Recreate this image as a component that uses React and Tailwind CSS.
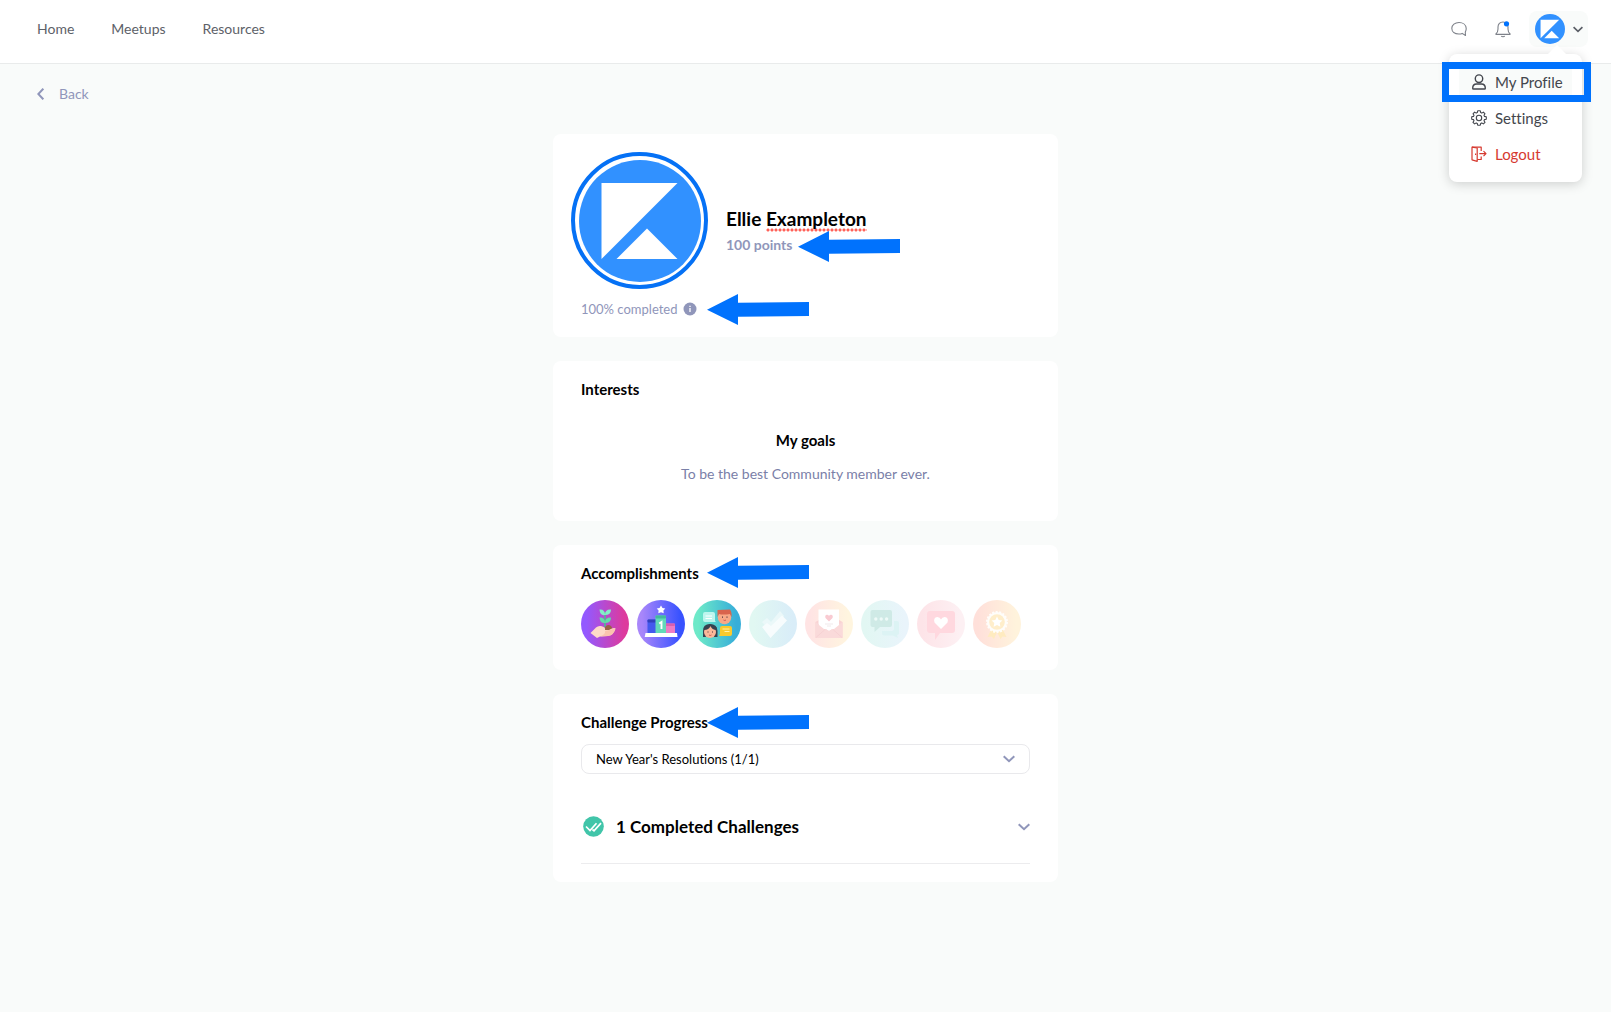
import React, { useState } from "react";

const LogoMark = ({ className }) => (
  <svg viewBox="0 0 122 122" className={className} aria-hidden="true">
    <circle cx="61" cy="61" r="61" fill="#3191ff" />
    <path d="M22.500 23H98.500L22.500 99Z" fill="#fff" />
    <path d="M37.500 99L68 68.500L98.500 99Z" fill="#fff" />
  </svg>
);

const Arrow = ({ className }) => (
  <svg viewBox="0 0 102 31" className={`absolute h-[31px] w-[102px] ${className}`} aria-hidden="true">
    <path d="M0 15.700L31 0V8.700L102 8V22L31 22.700V31Z" fill="#0072fd" />
  </svg>
);

const Chevron = ({ className }) => (
  <svg viewBox="0 0 12 8" className={className} fill="none" stroke="currentColor" strokeWidth="2" aria-hidden="true">
    <path d="M0.700 1.200L6 6.200L11.300 1.200" />
  </svg>
);

const ChatIcon = () => (
  <svg viewBox="0 0 16 16" className="h-4 w-4" fill="none" stroke="#7d8189" strokeWidth="1.100" strokeLinejoin="round" aria-hidden="true">
    <path d="M14.300 11.100C15 10 15.300 8.900 15.200 7.300C15 3.800 12 1.500 8 1.500C4 1.500 0.800 3.900 0.800 7.300C0.800 10.800 3.800 13 7.800 13C9 13 10.200 12.800 11.200 12.400L14.500 14.500Z" />
  </svg>
);

const BellIcon = () => (
  <svg viewBox="0 0 16 18" className="h-[18px] w-4" fill="none" stroke="#7d8189" strokeWidth="1.100" strokeLinejoin="round" aria-hidden="true">
    <path d="M1 13.800C2.600 12.500 3 11.500 3 9V7C3 4 5 2 8 2C11 2 13 4 13 7V9C13 11.500 13.400 12.500 15 13.800V14.400H1Z" />
    <path d="M6.200 16.200C7 17 9 17 9.800 16.200" />
    <circle cx="11.500" cy="3.800" r="2.600" fill="#0072fd" stroke="none" />
  </svg>
);

const UserIcon = () => (
  <svg viewBox="0 0 16 16" className="h-4 w-4" fill="none" stroke="currentColor" strokeWidth="1.400" aria-hidden="true">
    <rect x="4.300" y="0.900" width="7.400" height="7.600" rx="3.700" />
    <path d="M5.500 10H10.500C13 10 14.300 11.700 14.300 14.200Q14.300 15 13.500 15H2.500Q1.700 15 1.700 14.200C1.700 11.700 3 10 5.500 10Z" />
  </svg>
);

const GearIcon = () => (
  <svg viewBox="0 0 16 16" className="h-4 w-4" fill="none" stroke="currentColor" strokeWidth="1.100" strokeLinejoin="round" aria-hidden="true">
    <path d="M6.700 0.800H9.300L9.700 2.600L10.800 3.100L12.400 2.100L14 3.800L13 5.300L13.500 6.400L15.300 6.800V9.200L13.500 9.600L13 10.700L14 12.300L12.400 13.900L10.800 12.900L9.700 13.400L9.300 15.200H6.700L6.300 13.400L5.200 12.900L3.600 13.900L2 12.300L3 10.700L2.500 9.600L0.700 9.200V6.800L2.500 6.400L3 5.300L2 3.800L3.600 2.100L5.200 3.100L6.300 2.600Z" />
    <circle cx="8" cy="8" r="2.700" />
  </svg>
);

const LogoutIcon = () => (
  <svg viewBox="0 0 16 16" className="h-4 w-4" fill="none" stroke="currentColor" strokeWidth="1.200" strokeLinejoin="round" aria-hidden="true">
    <path d="M1 1.200L6.200 2V15.300L1 13.800Z" />
    <path d="M1 1.200H10.200V5M10.200 10.500V13.500H6.200M4.600 7.500V8.900" />
    <path d="M8.300 7.700H14.800M12.500 5.200L15 7.700L12.500 10.200" />
  </svg>
);

const badges = [
  {
    name: "Seedling",
    from: "#9359ff",
    to: "#dd3a9d",
    art: (
      <>
        <path d="M24 27V12" stroke="#43c58d" strokeWidth="1.500" />
        <path d="M24 15Q19 16 18.500 9.500Q24 9 24 15Q24 9 30 9.500Q30 15 24 15Z" fill="#85edc9" />
        <path d="M24 23Q19 23.500 18.500 17.500Q24 17 24 23Q24 17 30 17.500Q30 23 24 23Z" fill="#62dca8" />
        <path d="M23 31Q24 24 28 25Q32 26 31 31Z" fill="#9a6047" />
        <path d="M9.500 33L15 27.500Q17 25.500 20 26Q25 27 24 30L28 30Q33 27 34.500 28.500Q33 35 27 36L19 36.500L16 38Z" fill="#fed9c8" />
        <path d="M24 31L34.500 28.500Q33 35 27 36L19 36.500Q25 34 24 31Z" fill="#fbc3ae" />
      </>
    ),
  },
  {
    name: "Podium",
    from: "#a886fa",
    to: "#3852ff",
    art: (
      <>
        <path d="M24 5.500L25.500 8L28.300 8.500L26.400 10.600L26.700 13.300L24 12.200L21.300 13.300L21.600 10.600L19.700 8.500L22.500 8Z" fill="#fff" />
        <rect x="10.500" y="19.500" width="9" height="14" rx="1" fill="#4359ed" />
        <rect x="10.500" y="19.500" width="9" height="3" rx="1" fill="#3140bd" />
        <rect x="28.500" y="23.500" width="9.500" height="10" rx="1" fill="#ed7cc5" />
        <rect x="28.500" y="23.500" width="9.500" height="2.500" rx="1" fill="#d85faf" />
        <rect x="18.500" y="15.500" width="10.500" height="18" rx="1" fill="#62d9b9" />
        <rect x="18.500" y="15.500" width="10.500" height="3" rx="1" fill="#43b99d" />
        <path d="M22.200 23.500L24.500 22V29" fill="none" stroke="#fff" strokeWidth="1.900" />
        <path d="M8.500 33H40L40.500 37H7.700Z" fill="#fff" />
      </>
    ),
  },
  {
    name: "Conversation",
    from: "#6de9c8",
    to: "#37aed9",
    art: (
      <>
        <path d="M12 12H20Q22 12 22 14V21L23 22H12Q10 22 10 20V14Q10 12 12 12Z" fill="#bdf6ee" />
        <path d="M12.500 16H19M12.500 18.500H19" stroke="#fff" strokeWidth="1" />
        <circle cx="31.500" cy="17.500" r="6.700" fill="#f8a987" />
        <path d="M24.500 17V10L37 9.500Q39 12 38.500 17L37 14Q30 15 26 14Z" fill="#d9644d" />
        <path d="M10 37V31Q10 24 17 24Q24 24 24.500 31V37Z" fill="#374250" />
        <circle cx="17" cy="32" r="6" fill="#fbb799" />
        <path d="M11 30Q16 30 17.500 26Q19 30 23.500 30V27L17 24L11 27Z" fill="#374250" />
        <path d="M29 26H37Q39 26 39 28V34Q39 36 37 36H26L27 34V28Q27 26 29 26Z" fill="#f9ca2e" />
        <path d="M29.500 29H36.500M31.500 31.500H36.500" stroke="#fff1a8" strokeWidth="1" />
        <path d="M29 17.200H30M33.500 17.200H34.500M14.500 32H15.500M19 32H20" stroke="#4b3540" strokeWidth="1.200" />
        <path d="M30.500 20Q31.700 21 33 20M16 35Q17.200 36 18.500 35" fill="none" stroke="#c94e4e" strokeWidth="0.900" />
      </>
    ),
  },
  {
    name: "Checklist",
    from: "#e1f8f2",
    to: "#d9edf8",
    art: (
      <>
        <path d="M13 22L18 18L22 22L31 11L35 16L22 32Z" fill="#ebf8f9" />
        <path d="M13 27L18 23L22 26L33 15.500L38 20.500L21.500 38Z" fill="#f7fcfd" />
      </>
    ),
  },
  {
    name: "Invitation",
    from: "#ffe4e4",
    to: "#fff5df",
    art: (
      <>
        <path d="M10.500 22L24 14L37.500 22V38H10.500Z" fill="#f9d3d3" />
        <path d="M13.500 9.500H34V26L24 31L13.500 26Z" fill="#fff" />
        <path d="M10.500 22L24 31L37.500 22V38H10.500Z" fill="#fadada" />
        <path d="M14 10H34V25L29 29H19L14 25Z" fill="#fff" />
        <path d="M11 37.500L20 29.500M37 37.500L28 29.500" stroke="#f5cdd0" strokeWidth="0.700" />
        <path d="M24 21.500L20.500 18Q19.500 15 22 14.700Q23.500 14.700 24 16Q24.500 14.700 26 14.700Q28.500 15 27.500 18Z" fill="#f9cbd2" />
        <path d="M20 24H28M22 26H26" stroke="#f1e9ea" strokeWidth="1" />
      </>
    ),
  },
  {
    name: "Discussion",
    from: "#e2f7f3",
    to: "#e9f4fb",
    art: (
      <>
        <path d="M33 21H36Q38 21 38 23V33Q38 35 36 35L37 38L32 35.500H23Q21 35.500 21 33V31H31Q33 31 33 28Z" fill="#dcf3f4" />
        <path d="M11.500 10H29Q31 10 31 12V25Q31 27 29 27H19L13.500 32V27H11.500Q9.500 27 9.500 25V12Q9.500 10 11.500 10Z" fill="#cfeae6" />
        <g fill="#eefaf8">
          <circle cx="14.800" cy="19" r="1.700" />
          <circle cx="20.200" cy="19" r="1.700" />
          <circle cx="25.600" cy="19" r="1.700" />
        </g>
      </>
    ),
  },
  {
    name: "Appreciation",
    from: "#fde4e8",
    to: "#fdf0f3",
    art: (
      <>
        <path d="M13 11H35Q38 11 38 14V30Q38 33 35 33H23L18 40L18 33H13Q10 33 10 30V14Q10 11 13 11Z" fill="#ffd8df" />
        <path d="M24 29L17.500 22.500Q16 17.500 20.300 17Q23 17 24 19.500Q25 17 27.700 17Q32 17.500 30.500 22.500Z" fill="#fff" />
      </>
    ),
  },
  {
    name: "Award",
    from: "#ffe0da",
    to: "#fff3dc",
    art: (
      <>
        <path d="M18 30L14.500 37L18.500 36.500L21 39L24 32L27.500 39L29.500 36.500L33.500 37L30 30Z" fill="#ffebc0" />
        <circle cx="24" cy="22" r="10" fill="#fffdfa" stroke="#fffdfa" strokeWidth="2" strokeDasharray="2 1.500" />
        <circle cx="24" cy="22" r="7.800" fill="#ffeecb" />
        <path d="M24 16.500L25.700 20L29.400 20.500L26.700 23L27.400 26.700L24 25L20.600 26.700L21.300 23L18.600 20.500L22.300 20Z" fill="#fff" />
      </>
    ),
  },
];

const Badge = ({ badge, index }) => (
  <svg viewBox="0 0 48 48" className="h-12 w-12" role="img" aria-label={badge.name}>
    <defs>
      <linearGradient id={`badge-${index}`}>
        <stop offset="0.100" stopColor={badge.from} />
        <stop offset="0.900" stopColor={badge.to} />
      </linearGradient>
    </defs>
    <circle cx="24" cy="24" r="24" fill={`url(#badge-${index})`} />
    {badge.art}
  </svg>
);

const UserMenu = () => (
  <div className="relative">
    <button
      type="button"
      aria-label="Account menu"
      className="flex h-9 items-center gap-2 rounded-lg bg-[#f9fbfa] pl-1.5 pr-[5px] text-[#5a5e66]"
    >
      <LogoMark className="h-[30px] w-[30px]" />
      <Chevron className="h-[7px] w-[10px]" />
    </button>
    <nav className="absolute right-1.5 top-[43px] z-10 w-[133px] rounded-lg bg-white py-2.5 text-[15px] text-[#43464d] shadow-[0_2px_12px_rgba(0,0,0,0.18)]">
      <svg viewBox="0 0 20 10" className="absolute -top-[9px] right-[15px] h-[10px] w-5" aria-hidden="true">
        <path d="M0 10L10 0L20 10Z" fill="#fff" />
      </svg>
      <a href="#profile" className="relative mx-2.5 flex h-9 items-center gap-2 bg-[#f9fbfa] pl-3">
        <UserIcon />
        My Profile
        <span className="absolute -inset-y-0.5 -left-[17px] -right-[19px] border-[7px] border-[#0072fd]" />
      </a>
      <a href="#settings" className="mx-2.5 flex h-9 items-center gap-2 pl-3">
        <GearIcon />
        Settings
      </a>
      <a href="#logout" className="mx-2.5 flex h-9 items-center gap-2 pl-3 text-[#d63a30]">
        <LogoutIcon />
        Logout
      </a>
    </nav>
  </div>
);

const App = () => {
  const [challenge, setChallenge] = useState("resolutions");

  return (
    <div className="min-h-screen bg-[#f9fbfa] font-['Lato','Liberation_Sans',sans-serif] text-[14px] leading-5 text-black [font-variant-ligatures:none]">
      <header className="flex h-16 items-start justify-between border-b border-[#e9ebeb] bg-white pl-[37px] pr-[23px] pt-[11px]">
        <nav className="flex h-9 items-center gap-[37px] text-[#5d6168]">
          <a href="#home">Home</a>
          <a href="#meetups">Meetups</a>
          <a href="#resources">Resources</a>
        </nav>
        <div className="flex h-9 items-center">
          <button type="button" aria-label="Messages" className="mr-7">
            <ChatIcon />
          </button>
          <button type="button" aria-label="Notifications" className="mr-[18px]">
            <BellIcon />
          </button>
          <UserMenu />
        </div>
      </header>

      <main className="pt-5">
        <a href="#back" className="ml-[37px] inline-flex items-center gap-[15px] align-top text-[#9096ba]">
          <svg viewBox="0 0 7 12" className="h-3 w-[7px]" fill="none" stroke="currentColor" strokeWidth="2" aria-hidden="true">
            <path d="M6.300 0.700L1.300 6L6.300 11.300" />
          </svg>
          Back
        </a>

        <div className="mx-auto mt-[30px] flex max-w-[505px] flex-col gap-6 pb-6">
          <section className="relative rounded-lg bg-white p-[18px]">
            <div className="flex gap-[18px]">
              <div className="flex h-[137px] w-[137px] items-center justify-center rounded-full border-4 border-[#0571f5]">
                <LogoMark className="h-[122px] w-[122px]" />
              </div>
              <div className="pt-[55px]">
                <h1 className="text-[19px] font-bold leading-6">
                  Ellie{" "}
                  <span className="bg-[radial-gradient(circle,#ff6259_1px,transparent_2px)] bg-[length:4px_4px] bg-[position:left_bottom] bg-repeat-x pb-0.5">
                    Exampleton
                  </span>
                </h1>
                <p className="mt-1 font-bold text-[#9096ba]">100 points</p>
              </div>
            </div>
            <p className="mt-2.5 flex items-center gap-1.5 pl-2.5 text-[13px] text-[#9096ba]">
              100% completed
              <svg viewBox="0 0 14 14" className="h-[14px] w-[14px]" role="img" aria-label="Info">
                <circle cx="7" cy="7" r="6.500" fill="#9096ba" />
                <path d="M7 6V10M7 3.700V5" stroke="#fff" strokeWidth="1.300" />
              </svg>
            </p>
            <Arrow className="left-[245px] top-[97px]" />
            <Arrow className="left-[154px] top-[160px]" />
          </section>

          <section className="rounded-lg bg-white px-7 pb-[37px] pt-[18px]">
            <h2 className="text-[15px] font-bold leading-5">Interests</h2>
            <div className="mt-[31px] text-center">
              <h3 className="text-[15px] font-bold leading-5">My goals</h3>
              <p className="mt-3.5 text-[#7a80a8]">To be the best Community member ever.</p>
            </div>
          </section>

          <section className="relative rounded-lg bg-white px-7 pb-[22px] pt-[18px]">
            <h2 className="text-[15px] font-bold leading-5">Accomplishments</h2>
            <div className="mt-[17px] flex gap-2">
              {badges.map((badge, index) => (
                <Badge key={badge.name} badge={badge} index={index} />
              ))}
            </div>
            <Arrow className="left-[154px] top-3" />
          </section>

          <section className="relative rounded-lg bg-white px-7 py-[18px]">
            <h2 className="text-[15px] font-bold leading-5">
              <label htmlFor="challenge">Challenge Progress</label>
            </h2>
            <div className="relative mt-3">
              <select
                id="challenge"
                value={challenge}
                onChange={(e) => setChallenge(e.target.value)}
                className="block h-[30px] w-full appearance-none rounded-lg border border-[#e9e9ec] bg-white px-3.5 text-[13px]"
              >
                <option value="resolutions">New Year's Resolutions (1/1)</option>
              </select>
              <Chevron className="pointer-events-none absolute right-[15px] top-[11px] h-2 w-3 text-[#9096ba]" />
            </div>
            <button
              type="button"
              className="mt-4 flex h-[74px] w-full items-center border-b border-[#ececee] text-[17px] font-bold"
            >
              <svg viewBox="0 0 21 21" className="ml-0.5 mr-3 h-[21px] w-[21px]" aria-hidden="true">
                <circle cx="10.500" cy="10.500" r="10.300" fill="#41c5a9" />
                <path d="M3 10.500L7 14.500L13.500 7.200M9.500 13.500L11 14.800L18 7.200" fill="none" stroke="#fff" strokeWidth="1.700" />
              </svg>
              1 Completed Challenges
              <Chevron className="ml-auto h-2 w-3 text-[#9096ba]" />
            </button>
            <Arrow className="left-[154px] top-[13px]" />
          </section>
        </div>
      </main>
    </div>
  );
};

export default App;
